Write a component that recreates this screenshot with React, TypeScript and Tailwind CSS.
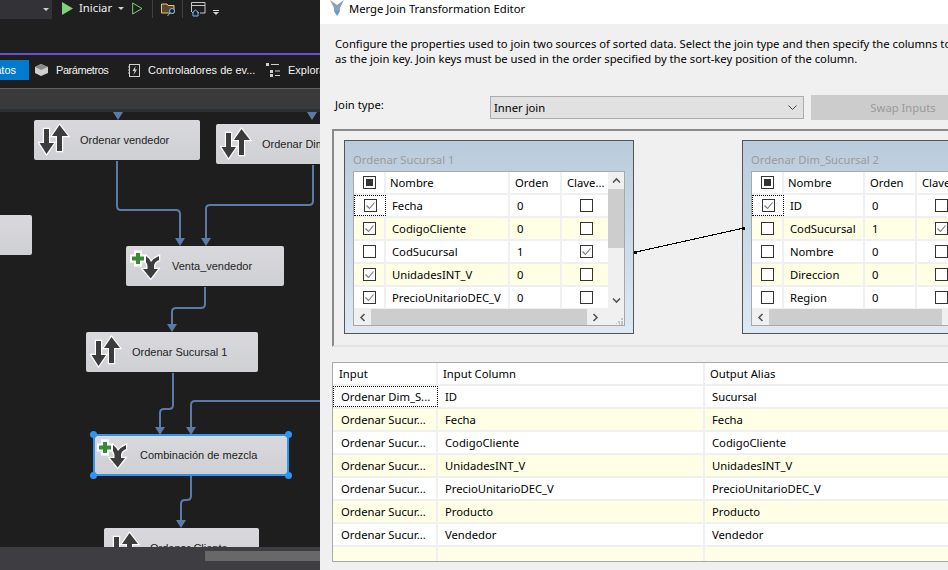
import { FC } from 'react';

const sans = 'font-["Noto_Sans",sans-serif]';
const arial = 'font-["Liberation_Sans",sans-serif]';

const SortIcon: FC = () => (
  <svg width="32" height="34" viewBox="0 0 32 34" className="shrink-0">
    <g fill="#3c3c3c" stroke="#fff" strokeWidth="2.4" paintOrder="stroke" strokeLinejoin="miter">
      <path d="M6 6 H11 V20 H16 L8.5 31 L1.5 20 H6 Z" />
      <path d="M19 28 H24 V13 H30 L21.5 2 L14 13 H19 Z" />
    </g>
  </svg>
);

const MergeIcon: FC = () => (
  <svg width="34" height="32" viewBox="0 0 34 32" className="shrink-0">
    <path
      d="M14 9 L17 6 Q21 9 22 12 Q25 8 30 6 L30 10 Q25 12 25 16 V19 H29 L21.7 28.5 L14 19 H18.5 V16 Q18 12 14 9 Z"
      fill="#3c3c3c"
      stroke="#fff"
      strokeWidth="2.6"
      paintOrder="stroke"
    />
    <path d="M5 0.5 H13 V4.5 H17 V12.5 H13 V16.5 H5 V12.5 H1 V4.5 H5 Z" fill="#fff" />
    <path d="M7 3 H11 V6.5 H15 V10.5 H11 V14 H7 V10.5 H3 V6.5 H7 Z" fill="#388a34" />
  </svg>
);

const Node: FC<{ label: string; pos: string; merge?: boolean; selected?: boolean }> = ({
  label,
  pos,
  merge,
  selected,
}) => (
  <div
    className={`absolute ${pos} h-[40px] flex items-center rounded-[2px] bg-gradient-to-b from-[#d9d9dd] to-[#cfd0d3] text-[11px] text-[#1e1e1e] ${arial} ${
      selected ? 'border-2 border-[#2e95f5]' : ''
    }`}
  >
    <div className={merge ? (selected ? 'w-[45px] pl-[1px]' : 'w-[46px] pl-[3px]') : 'w-[46px] pl-[4px]'}>
      {merge ? <MergeIcon /> : <SortIcon />}
    </div>
    <span className="whitespace-nowrap">{label}</span>
    {selected && (
      <>
        <i className="absolute -left-[5px] -top-[5px] w-[7px] h-[7px] rounded-full bg-[#2e95f5]" />
        <i className="absolute -right-[5px] -top-[5px] w-[7px] h-[7px] rounded-full bg-[#2e95f5]" />
        <i className="absolute -left-[5px] -bottom-[5px] w-[7px] h-[7px] rounded-full bg-[#2e95f5]" />
        <i className="absolute -right-[5px] -bottom-[5px] w-[7px] h-[7px] rounded-full bg-[#2e95f5]" />
      </>
    )}
  </div>
);

const Arrow: FC<{ x: number; y: number }> = ({ x, y }) => (
  <path d={`M${x - 5} ${y} H${x + 5} L${x} ${y + 8} Z`} fill="#5a7ba8" />
);

const Flows: FC = () => (
  <svg className="absolute left-0 top-0" width="320" height="435" viewBox="0 112 320 435">
    <g fill="none" stroke="#5a7ba8" strokeWidth="2">
      <path d="M117 161 V206 Q117 210 121 210 H176 Q180 210 180 214 V239" />
      <path d="M313 165 V201 Q313 205 309 205 H210 Q206 205 206 209 V239" />
      <path d="M205 287 V304 Q205 308 201 308 H176 Q172 308 172 312 V325" />
      <path d="M173 373 V405 Q173 409 169 409 H164 Q160 409 160 413 V428" />
      <path d="M320 401 H195 Q191 401 191 405 V428" />
      <path d="M191 476 V496 Q191 500 187 500 H185 Q181 500 181 504 V521" />
    </g>
    <Arrow x={118} y={112} />
    <Arrow x={312} y={112} />
    <Arrow x={180} y={238} />
    <Arrow x={206} y={238} />
    <Arrow x={172} y={324} />
    <Arrow x={160} y={427} />
    <Arrow x={191} y={427} />
    <Arrow x={181} y={520} />
  </svg>
);

const Designer: FC = () => (
  <div className={`w-[320px] h-full shrink-0 flex flex-col bg-[#1e1e1e] text-[#f1f1f1] text-[11px] overflow-hidden ${arial}`}>
    <div className="h-[53px] shrink-0 flex items-start bg-[#1f1f1f]">
      <div className="w-[52px] h-[19px] bg-[#333337] flex items-center justify-end pr-[3px]">
        <i className="border-x-[3px] border-x-transparent border-t-[3px] border-t-[#d0d0d0]" />
      </div>
      <svg width="11" height="13" viewBox="0 0 11 13" className="ml-[10px] mt-[2px]">
        <path d="M0 0 L11 6.5 L0 13 Z" fill="#7fd17a" />
      </svg>
      <span className={`ml-[6px] text-[11.3px] ${sans}`}>Iniciar</span>
      <i className="ml-[6px] mt-[7px] border-x-[3px] border-x-transparent border-t-[3px] border-t-[#d0d0d0]" />
      <svg width="11" height="13" viewBox="0 0 11 13" className="ml-[8px] mt-[2px]">
        <path d="M0.7 1 L10 6.5 L0.7 12 Z" fill="none" stroke="#7fd17a" />
      </svg>
      <i className="w-px h-[18px] ml-[9px] bg-[#3f3f46]" />
      <svg width="16" height="15" viewBox="0 0 16 15" className="ml-[8px] mt-[2px]">
        <path d="M0.5 2 H6 L7 3.5 H13 V11 H0.5 Z" fill="#5a4a2c" stroke="#e8c578" />
        <circle cx="11" cy="9" r="2.5" fill="#1f1f1f" stroke="#75beff" />
        <path d="M9 11 L6.5 14" stroke="#75beff" />
      </svg>
      <i className="w-px h-[18px] ml-[5px] bg-[#3f3f46]" />
      <svg width="15" height="15" viewBox="0 0 15 15" className="ml-[8px] mt-[2px]">
        <path d="M0.5 10 V0.5 H14 V11 H9 M0.5 3.5 H14" fill="none" stroke="#c8c8c8" />
        <path d="M1 11 L4.5 8 L8 11 M2 10 V14 H7 V10" fill="none" stroke="#75beff" />
      </svg>
      <div className="ml-[7px] mt-[10px] flex flex-col gap-[1px]">
        <i className="w-[6px] h-px bg-[#d0d0d0]" />
        <i className="border-x-[3px] border-x-transparent border-t-[3px] border-t-[#d0d0d0]" />
      </div>
    </div>
    <div className="h-[2px] shrink-0 bg-[#6a50d0]" />
    <div className="h-[25px] shrink-0 pt-[5px] flex items-center whitespace-nowrap">
      <div className="w-[29px] h-[20px] bg-[#007acc] flex items-center justify-end overflow-hidden shrink-0 pr-[13px]">
        <span className="text-white">atos</span>
      </div>
      <svg width="15" height="14" viewBox="0 0 15 14" className="ml-[5px] shrink-0">
        <path d="M1 4 L7 1 L14 4 L14 10 L7 13 L1 10 Z" fill="#d0d0d0" />
        <path d="M1 4 L7 7 L14 4 L7 1 Z" fill="#8a8a8a" />
      </svg>
      <span className="ml-[7px] w-[52px] tracking-[-0.45px] shrink-0">Parámetros</span>
      <svg width="13" height="13" viewBox="0 0 13 13" className="ml-[20px] shrink-0">
        <rect x="1.5" y="0.5" width="10" height="12" fill="none" stroke="#d0d0d0" />
        <path d="M7.5 2 L4.5 7 H6.5 L5.5 11 L9 5.5 H7 Z" fill="#d0d0d0" />
        <path d="M0 3 H2 M0 6 H2 M0 9 H2" stroke="#d0d0d0" />
      </svg>
      <span className="ml-[7px] w-[105px] shrink-0">Controladores de ev...</span>
      <svg width="15" height="14" viewBox="0 0 15 14" className="ml-[13px] shrink-0">
        <path d="M0 0 H3 V3 H0 Z M4 7 H7 V10 H4 Z M4 11 H7 V14 H4 Z" fill="#d0d0d0" />
        <path d="M5 1.5 H13 M9 8 H14 M9 12.5 H14" stroke="#d0d0d0" />
      </svg>
      <span className="ml-[7px]">Explorador</span>
    </div>
    <div className="h-[8px] shrink-0" />
    <div className="h-[21px] shrink-0 bg-[#3a3a3a] border-t border-t-[#5f5f5f]" />
    <div className="h-[3px] shrink-0 bg-[#2d3033]" />
    <div className="relative flex-1 overflow-hidden">
      <Flows />
      <div className="absolute left-0 top-[103px] w-[32px] h-[40px] rounded-r-[2px] bg-gradient-to-b from-[#d9d9dd] to-[#cfd0d3]" />
      <Node label="Ordenar vendedor" pos="left-[34px] top-[8px] w-[166px]" />
      <Node label="Ordenar Dim_Sucursal" pos="left-[216px] top-[12px] w-[170px]" />
      <Node label="Venta_vendedor" pos="left-[126px] top-[134px] w-[158px]" merge />
      <Node label="Ordenar Sucursal 1" pos="left-[86px] top-[220px] w-[172px]" />
      <Node label="Combinación de mezcla" pos="left-[93px] top-[322px] w-[196px] h-[42px]" merge selected />
      <Node label="Ordenar Cliente" pos="left-[104px] top-[416px] w-[155px]" />
    </div>
    <div className="h-[23px] shrink-0 bg-[#3e3e42] flex items-start justify-end pt-[4px]">
      <div className="w-[115px] h-[10px] bg-[#686868]" />
    </div>
  </div>
);

const CheckBox: FC<{ checked?: boolean; mixed?: boolean }> = ({ checked, mixed }) => (
  <span className="w-[13px] h-[13px] border border-[#333] bg-white flex items-center justify-center shrink-0">
    {checked && (
      <svg width="11" height="11" viewBox="0 0 11 11">
        <path d="M1.5 5.5 L4.5 8.5 L9.5 2.5" fill="none" stroke="#777" strokeWidth="1.1" />
      </svg>
    )}
    {mixed && <i className="w-[7px] h-[7px] bg-[#333]" />}
  </span>
);

const ChevUp: FC = () => (
  <svg width="9" height="7" viewBox="0 0 9 7">
    <path d="M1 5.5 L4.5 2 L8 5.5" fill="none" stroke="#555" strokeWidth="1.6" />
  </svg>
);
const ChevDown: FC = () => (
  <svg width="9" height="7" viewBox="0 0 9 7">
    <path d="M1 1.5 L4.5 5 L8 1.5" fill="none" stroke="#555" strokeWidth="1.6" />
  </svg>
);
const ChevLeft: FC = () => (
  <svg width="7" height="9" viewBox="0 0 7 9">
    <path d="M5.5 1 L2 4.5 L5.5 8" fill="none" stroke="#555" strokeWidth="1.6" />
  </svg>
);
const ChevRight: FC = () => (
  <svg width="7" height="9" viewBox="0 0 7 9">
    <path d="M1.5 1 L5 4.5 L1.5 8" fill="none" stroke="#555" strokeWidth="1.6" />
  </svg>
);

type Col = { name: string; on: boolean; order: number; key: boolean };

const leftCols: Col[] = [
  { name: 'Fecha', on: true, order: 0, key: false },
  { name: 'CodigoCliente', on: true, order: 0, key: false },
  { name: 'CodSucursal', on: false, order: 1, key: true },
  { name: 'UnidadesINT_V', on: true, order: 0, key: false },
  { name: 'PrecioUnitarioDEC_V', on: true, order: 0, key: false },
];

const rightCols: Col[] = [
  { name: 'ID', on: true, order: 0, key: false },
  { name: 'CodSucursal', on: false, order: 1, key: true },
  { name: 'Nombre', on: false, order: 0, key: false },
  { name: 'Direccion', on: false, order: 0, key: false },
  { name: 'Region', on: false, order: 0, key: false },
];

const InputTable: FC<{
  title: string;
  cols: Col[];
  nameW: string;
  thumb: string;
}> = ({ title, cols, nameW, thumb }) => (
  <div className="w-[290px] h-[194px] shrink-0 border border-[#555] bg-gradient-to-b from-[#b9cbdc] to-[#dde9f5] px-[8px] flex flex-col">
    <div className="h-[30px] shrink-0 pt-[10px] text-[#9b9b9b] leading-[17px] whitespace-nowrap">{title}</div>
    <div className="h-[155px] border border-[#a8a8a8] bg-white flex flex-col overflow-hidden">
      <div className="flex flex-1 min-h-0">
        <div className="flex-1 min-w-0 flex flex-col">
          <div className="h-[23px] shrink-0 flex border-b-2 border-b-[#f0f0f0]">
            <div className="w-[32px] shrink-0 flex items-center justify-center border-r-2 border-r-[#f0f0f0]">
              <CheckBox mixed />
            </div>
            <div className={`${nameW} shrink-0 pl-[4px] pt-[2px] flex items-center border-r-2 border-r-[#f0f0f0]`}>Nombre</div>
            <div className="w-[52px] shrink-0 pl-[5px] pt-[2px] flex items-center border-r-2 border-r-[#f0f0f0]">Orden</div>
            <div className="w-[46px] shrink-0 pl-[5px] pt-[2px] flex items-center whitespace-nowrap">Clave...</div>
          </div>
          {cols.map((c, i) => (
            <div
              key={c.name}
              className={`h-[23px] shrink-0 flex border-b-2 border-b-[#f0f0f0] ${i % 2 ? 'bg-[#ffffe6]' : 'bg-white'}`}
            >
              <div
                className={`w-[32px] shrink-0 flex items-center justify-center ${
                  i === 0 ? 'outline outline-1 -outline-offset-1 outline-dotted outline-black' : 'border-r-2 border-r-[#f0f0f0]'
                }`}
              >
                <CheckBox checked={c.on} />
              </div>
              <div className={`${nameW} shrink-0 pl-[6px] pt-[2px] flex items-center border-r-2 border-r-[#f0f0f0] whitespace-nowrap`}>
                {c.name}
              </div>
              <div className="w-[52px] shrink-0 pl-[7px] pt-[2px] flex items-center border-r-2 border-r-[#f0f0f0]">{c.order}</div>
              <div className="w-[46px] shrink-0 flex items-center justify-center pl-[2px]">
                <CheckBox checked={c.key} />
              </div>
            </div>
          ))}
        </div>
        <div className="w-[16px] shrink-0 bg-[#f0f0f0] flex flex-col items-center">
          <div className="h-[17px] flex items-center">
            <ChevUp />
          </div>
          <div className="w-full h-[59px] bg-[#cdcdcd]" />
          <div className="flex-1" />
          <div className="h-[17px] flex items-center">
            <ChevDown />
          </div>
        </div>
      </div>
      <div className="h-[16px] shrink-0 bg-[#f0f0f0] flex items-center">
        <div className="w-[17px] flex justify-center">
          <ChevLeft />
        </div>
        <div className={`${thumb} h-full bg-[#cdcdcd]`} />
        <div className="w-[17px] flex justify-center">
          <ChevRight />
        </div>
        <div className="flex-1 flex justify-end self-end">
          <svg width="8" height="8" viewBox="0 0 8 8">
            <path d="M5 1 H7 V3 H5 Z M2 4 H4 V6 H2 Z M5 4 H7 V6 H5 Z M0 6 H1 V7 H0 Z M3 6 H4 V8 H3 Z M5 6 H7 V8 H5 Z" fill="#c4c4c4" />
          </svg>
        </div>
      </div>
    </div>
  </div>
);

const mapping = [
  ['Ordenar Dim_S...', 'ID', 'Sucursal'],
  ['Ordenar Sucur...', 'Fecha', 'Fecha'],
  ['Ordenar Sucur...', 'CodigoCliente', 'CodigoCliente'],
  ['Ordenar Sucur...', 'UnidadesINT_V', 'UnidadesINT_V'],
  ['Ordenar Sucur...', 'PrecioUnitarioDEC_V', 'PrecioUnitarioDEC_V'],
  ['Ordenar Sucur...', 'Producto', 'Producto'],
  ['Ordenar Sucur...', 'Vendedor', 'Vendedor'],
  ['', '', ''],
];

const Editor: FC = () => (
  <div className="flex-1 min-w-0 h-full flex flex-col bg-[#f0f0f0] text-[11.25px] text-black overflow-hidden">
    <div className="h-[24px] shrink-0 bg-white flex items-start pl-[9px]">
      <svg width="16" height="16" viewBox="0 0 16 16">
        <path d="M1 0 L8 5 L15 0 L11 8 L11 11 L5 11 L5 8 Z" fill="#8aa0b4" />
        <path d="M5 11 H11 L8 16 Z" fill="#5d9bd0" />
      </svg>
      <span className="ml-[4px] leading-[17px] whitespace-nowrap">Merge Join Transformation Editor</span>
    </div>
    <div className="h-[72px] shrink-0 pl-[15px] pt-[12px] leading-[15px] whitespace-nowrap">
      <p>Configure the properties used to join two sources of sorted data. Select the join type and then specify the columns to</p>
      <p>as the join key. Join keys must be used in the order specified by the sort-key position of the column.</p>
    </div>
    <div className="h-[24px] shrink-0 pl-[15px] flex items-start">
      <span className="w-[155px] mt-[1px] shrink-0">Join type:</span>
      <div className="w-[314px] h-[23px] shrink-0 border border-[#adadad] bg-[#e1e1e1] pl-[3px] flex items-center justify-between pr-[6px]">
        <span className="mt-[1px]">Inner join</span>
        <svg width="9" height="6" viewBox="0 0 9 6">
          <path d="M0.5 0.5 L4.5 4.5 L8.5 0.5" fill="none" stroke="#444" />
        </svg>
      </div>
      <div className="ml-[7px] -mt-[1px] w-[184px] h-[25px] pt-[1px] bg-[#cccccc] flex items-center justify-center text-[#9a9a9a] shrink-0">
        Swap Inputs
      </div>
    </div>
    <div className="relative mt-[9px] ml-[12px] h-[218px] shrink-0 border-t-2 border-l-2 border-t-[#8a8a8a] border-l-[#8a8a8a] pl-[10px] pt-[9px] flex gap-[108px] border-b-2 border-b-[#e4e4e4] overflow-hidden">
      <svg className="absolute left-0 top-0" width="616" height="216" viewBox="332 131 616 216" shapeRendering="crispEdges">
        <path d="M634 252 L742 228" stroke="#000" fill="none" />
        <rect x="632" y="251" width="3" height="3" fill="#000" />
        <rect x="740" y="227" width="3" height="3" fill="#000" />
      </svg>
      <InputTable title="Ordenar Sucursal 1" cols={leftCols} nameW="w-[124px]" thumb="w-[216px]" />
      <InputTable title="Ordenar Dim_Sucursal 2" cols={rightCols} nameW="w-[81px]" thumb="w-[173px]" />
    </div>
    <div className="mt-[15px] ml-[12px] h-[200px] shrink-0 border border-[#a8a8a8] border-r-0 bg-white flex flex-col overflow-hidden">
      <div className="h-[23px] shrink-0 flex border-b-2 border-b-[#f0f0f0]">
        <div className="w-[105px] shrink-0 pl-[6px] pt-[2px] flex items-center border-r-2 border-r-[#f0f0f0]">Input</div>
        <div className="w-[267px] shrink-0 pl-[5px] pt-[2px] flex items-center border-r-2 border-r-[#f0f0f0]">Input Column</div>
        <div className="flex-1 pl-[5px] pt-[2px] flex items-center">Output Alias</div>
      </div>
      {mapping.map((m, i) => (
        <div
          key={i}
          className={`h-[23px] shrink-0 flex border-b-2 border-b-[#f0f0f0] ${i % 2 ? 'bg-[#ffffe6]' : 'bg-white'}`}
        >
          <div
            className={`w-[105px] shrink-0 pl-[8px] pt-[2px] flex items-center whitespace-nowrap ${
              i === 0 ? 'outline outline-1 -outline-offset-1 outline-dotted outline-black' : 'border-r-2 border-r-[#f0f0f0]'
            }`}
          >
            {m[0]}
          </div>
          <div className="w-[267px] shrink-0 pl-[7px] pt-[2px] flex items-center border-r-2 border-r-[#f0f0f0]">{m[1]}</div>
          <div className="flex-1 pl-[7px] pt-[2px] flex items-center">{m[2]}</div>
        </div>
      ))}
    </div>
  </div>
);

export default function App() {
  return (
    <div className={`w-[948px] h-[570px] flex overflow-hidden ${sans}`}>
      <Designer />
      <Editor />
    </div>
  );
}
